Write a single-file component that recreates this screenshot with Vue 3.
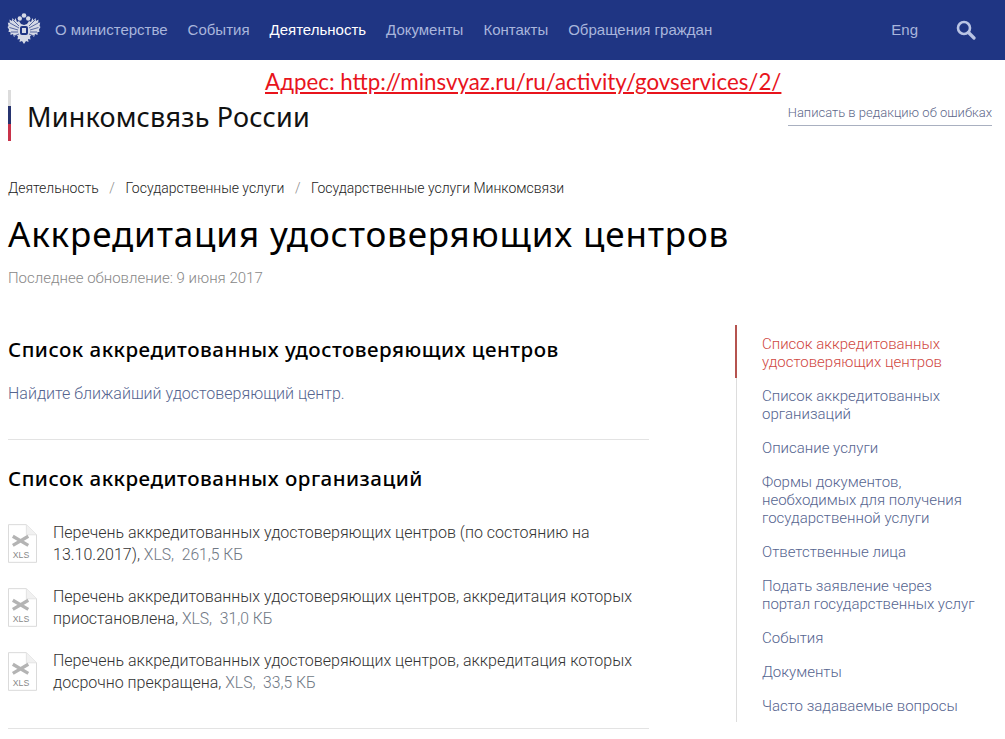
<script setup>
const navItems = [
  { label: 'О министерстве' },
  { label: 'События' },
  { label: 'Деятельность', active: true },
  { label: 'Документы' },
  { label: 'Контакты' },
  { label: 'Обращения граждан' }
]

const crumbs = ['Деятельность', 'Государственные услуги', 'Государственные услуги Минкомсвязи']

const files = [
  { lines: 'Перечень аккредитованных удостоверяющих центров (по состоянию на 13.10.2017),', size: '261,5 КБ' },
  { lines: 'Перечень аккредитованных удостоверяющих центров, аккредитация которых приостановлена,', size: '31,0 КБ' },
  { lines: 'Перечень аккредитованных удостоверяющих центров, аккредитация которых досрочно прекращена,', size: '33,5 КБ' }
]

const sideLinks = [
  { label: 'Список аккредитованных удостоверяющих центров', active: true },
  { label: 'Список аккредитованных организаций' },
  { label: 'Описание услуги' },
  { label: 'Формы документов, необходимых для получения государственной услуги' },
  { label: 'Ответственные лица' },
  { label: 'Подать заявление через портал государственных услуг' },
  { label: 'События' },
  { label: 'Документы' },
  { label: 'Часто задаваемые вопросы' }
]
</script>

<template>
  <div class="page">
    <header class="topbar">
      <svg class="emblem" width="34" height="32" viewBox="0 0 34 32">
        <g fill="#d5d9e6">
          <path d="M14 11L12 8 10 9 8.500 5 7.500 7.500 5.500 5 5 8 2.500 6.500 2.800 10 .8 9.500 1.500 13 .5 14 2 16.500 1.500 19 3.500 19 3.500 22 6 21 7 24 9.500 22 11 23.500 10.500 26.500 13 26 12.500 29 15 28 17 31 19 28 21.500 29 21 26 23.500 26.500 23 23.500 24.500 22 27 24 28 21 30.500 22 30.500 19 32.500 19 32 16.500 33.500 14 32.500 13 33.200 9.500 31.200 10 31.500 6.500 29 8 28.500 5 26.500 7.500 25.500 5 24 9 22 8 20 11 17 12z" />
          <circle cx="17" cy="2.500" r="2.300" />
          <circle cx="12.800" cy="5.500" r="2.200" />
          <circle cx="21.200" cy="5.500" r="2.200" />
        </g>
        <path d="M12 13L6 7M12 15L3 10M11 17L2.500 14.500M11 19L4 19M12 21L7 23M22 13L28 7M22 15L31 10M23 17L31.500 14.500M23 19L30 19M22 21L27 23" stroke="#1f3583" stroke-width=".7" />
        <rect x="13" y="13" width="8" height="9" rx="2" fill="#1f3583" />
        <rect x="15" y="15" width="4" height="5" fill="#d5d9e6" />
      </svg>
      <nav class="menu">
        <a v-for="item in navItems" :key="item.label" :class="{ on: item.active }">{{ item.label }}</a>
      </nav>
      <a class="lang">Eng</a>
      <svg class="search" width="20" height="20" viewBox="0 0 20 20">
        <circle cx="8" cy="8" r="6" fill="none" stroke="#b9c4e4" stroke-width="2.600" />
        <path d="M12.500 12.500L18 18" stroke="#b9c4e4" stroke-width="3.200" stroke-linecap="round" />
      </svg>
    </header>

    <div class="address">Адрес: http://minsvyaz.ru/ru/activity/govservices/2/</div>

    <div class="brand">
      <div class="brand-name">Минкомсвязь России</div>
      <a class="report">Написать в редакцию об ошибках</a>
    </div>

    <div class="crumbs">
      <template v-for="(c, i) in crumbs" :key="c">
        <span v-if="i" class="sep">/</span>
        <span>{{ c }}</span>
      </template>
    </div>

    <h1>Аккредитация удостоверяющих центров</h1>
    <div class="updated">Последнее обновление: 9 июня 2017</div>

    <div class="columns">
      <main class="content">
        <h2>Список аккредитованных удостоверяющих центров</h2>
        <a class="find">Найдите ближайший удостоверяющий центр.</a>
        <hr />
        <h2 class="second">Список аккредитованных организаций</h2>
        <div class="files">
          <div v-for="f in files" :key="f.lines" class="file">
            <svg class="xls" width="29" height="39" viewBox="0 0 30 40">
              <path d="M.500.500H19L29.500 11V39.500H.500z" fill="#fff" stroke="#d9d9d9" />
              <path d="M19 .500V11H29.500" fill="#f1f1f1" stroke="#e2e2e2" />
              <path d="M5 12.500L21 22M21 12.500L5 22" stroke="#b4b4b4" stroke-width="3.400" />
              <text x="13.500" y="34.500" class="xls-label">XLS</text>
            </svg>
            <p>{{ f.lines }} <span class="meta">XLS,&nbsp; {{ f.size }}</span></p>
          </div>
        </div>
        <hr class="last" />
      </main>
      <aside class="side">
        <a v-for="l in sideLinks" :key="l.label" :class="{ on: l.active }">{{ l.label }}</a>
      </aside>
    </div>
  </div>
</template>

<style>
html, body {
  background: #fff;
  overflow: hidden;
}
</style>

<style scoped>
.page {
  position: relative;
  width: 1005px;
  height: 739px;
  overflow: hidden;
  font-family: Roboto, "Liberation Sans", sans-serif;
  font-weight: 300;
  color: #333;
}

.topbar {
  height: 60px;
  background: #1f3583;
  display: flex;
  align-items: center;
  padding: 0 29px 0 7px;
  box-sizing: border-box;
}

.emblem {
  margin: 0 14px 2px 0;
  flex: none;
}

.menu {
  display: flex;
  gap: 20px;
  flex: 1;
  margin-bottom: 2px;
  font-family: "Liberation Sans", sans-serif;
  font-size: 15px;
  font-weight: 400;
  color: #a9b5dc;
}

.menu .on {
  color: #fff;
}

.lang {
  font-family: "Liberation Sans", sans-serif;
  font-size: 15px;
  font-weight: 400;
  color: #a9b5dc;
  margin: 0 38px 2px 0;
}

.address {
  position: absolute;
  left: 265px;
  top: 68px;
  font-family: Lato, sans-serif;
  font-weight: 400;
  font-size: 22.300px;
  line-height: 28px;
  color: #e8141c;
  text-decoration: underline;
  white-space: nowrap;
}

.brand {
  display: flex;
  justify-content: space-between;
  align-items: flex-start;
  margin: 30px 13px 0 8px;
  height: 51px;
  padding-left: 19px;
  border-left: 3px solid;
  border-image: linear-gradient(#dcdcdc 33%, #27346f 33%, #27346f 66%, #c8324a 66%) 1;
}

.brand-name {
  font-family: "Noto Sans", sans-serif;
  font-weight: 400;
  font-size: 27px;
  letter-spacing: .2px;
  line-height: 36px;
  margin: 9px 0 0 -3px;
  color: #111;
}

.report {
  margin-top: 15px;
  padding-bottom: 4px;
  border-bottom: 1px solid #a9b0c0;
  font-size: 13px;
  line-height: 16px;
  color: #5d6789;
}

.crumbs {
  display: flex;
  gap: 10.500px;
  margin: 38px 0 0 8px;
  font-size: 14px;
  line-height: 18px;
  color: #222;
}

.sep {
  color: #888;
}

h1 {
  margin: 12px 0 0 8px;
  font-family: "Noto Sans", sans-serif;
  font-weight: 400;
  font-size: 35px;
  letter-spacing: .85px;
  line-height: 50px;
  color: #000;
}

.updated {
  margin: 9px 0 0 8px;
  font-size: 15px;
  line-height: 20px;
  color: #888;
}

.columns {
  display: flex;
  margin-top: 38px;
}

.content {
  width: 641px;
  margin-left: 8px;
  flex: none;
}

h2 {
  margin: 8px 0 0;
  font-family: "Noto Sans", sans-serif;
  font-weight: 500;
  font-size: 20.500px;
  letter-spacing: .5px;
  line-height: 30px;
  color: #000;
}

.find {
  display: block;
  margin-top: 20px;
  font-size: 16px;
  line-height: 20px;
  color: #55648f;
}

hr {
  margin: 35px 0 0;
  border: 0;
  border-top: 1px solid #e3e3e3;
}

.second {
  margin-top: 23px;
}

.files {
  display: flex;
  flex-direction: column;
  gap: 20px;
  margin-top: 29px;
}

.file {
  display: flex;
  gap: 16px;
}

.xls {
  flex: none;
  margin-top: 2px;
}

.xls-label {
  font-family: "Liberation Sans", sans-serif;
  font-size: 9px;
  font-weight: 400;
  fill: #888;
  text-anchor: middle;
}

.file p {
  margin: 0;
  font-size: 16px;
  line-height: 22px;
  color: #333;
}

.meta {
  color: #6f7884;
  font-size: 15.700px;
}

.last {
  margin-top: 34px;
}

.side {
  margin: -1px 0 0 87px;
  width: 260px;
  border-left: 1px solid #ddd;
  display: flex;
  flex-direction: column;
  gap: 16px;
  padding: 10px 0 0;
  height: 397px;
  box-sizing: border-box;
  position: relative;
}

.side a {
  display: block;
  padding-left: 25px;
  width: 216px;
  font-size: 15px;
  line-height: 18px;
  color: #55648f;
}

.side a.on {
  color: #d0483f;
  position: relative;
}

.side a.on::before {
  content: "";
  position: absolute;
  left: -2px;
  top: -10px;
  bottom: -7px;
  width: 2px;
  background: #b5534f;
}
</style>
